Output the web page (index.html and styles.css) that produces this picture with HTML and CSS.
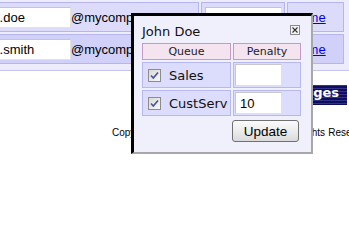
FILE: index.html
```html
<!DOCTYPE html>
<html>
<head>
<meta charset="utf-8">
<link rel="stylesheet" href="styles.css">
</head>
<body>
<div class="page">
  <div class="grid">
    <div class="row r1">
      <div class="cell c-user"><input class="txt user" value="john.doe"><span class="domain">@mycompany.com</span></div>
      <div class="cell c-ext"><input class="txt ext" value="1001"></div>
      <div class="cell c-link"><a href="#">Name</a></div>
    </div>
    <div class="row r2">
      <div class="cell c-user"><input class="txt user" value="jane.smith"><span class="domain">@mycompany.com</span></div>
      <div class="cell c-ext"><input class="txt ext" value="1002"></div>
      <div class="cell c-link"><a href="#">Name</a></div>
    </div>
  </div>
  <div class="savebar"><span class="save">Save Changes</span></div>
  <div class="copy">Copyright © 2009 MyCompany, Inc. – All Rights Reserved.</div>
</div>

<div class="popup">
  <div class="ptitle">
    <span>John Doe</span>
    <svg class="close" width="10" height="10" viewBox="0 0 10 10">
      <rect x="0.5" y="0.5" width="9" height="9" fill="#f2f2f2" stroke="#8a8a8a"/>
      <path d="M2.5 2.5 L7.5 7.5 M7.5 2.5 L2.5 7.5" stroke="#333" stroke-width="1.1"/>
    </svg>
  </div>
  <div class="ptable">
    <div class="th">Queue</div>
    <div class="th">Penalty</div>
    <div class="td qcell">
      <span class="cb"><svg width="11" height="11" viewBox="0 0 11 11"><path d="M2 5.5 L4.3 8 L9 2.5" fill="none" stroke="#46549a" stroke-width="1.6"/></svg></span>
      <span>Sales</span>
    </div>
    <div class="td pcell"><input class="pin" value=""></div>
    <div class="td qcell">
      <span class="cb"><svg width="11" height="11" viewBox="0 0 11 11"><path d="M2 5.5 L4.3 8 L9 2.5" fill="none" stroke="#46549a" stroke-width="1.6"/></svg></span>
      <span>CustServ</span>
    </div>
    <div class="td pcell"><input class="pin" value="10"></div>
  </div>
  <div class="actions"><button class="btn">Update</button></div>
</div>
</body>
</html>
```

FILE: styles.css
```css
html, body {
  margin: 0;
  background: #fff;
  overflow: hidden;
}
body {
  font-family: "Liberation Sans", Arial, sans-serif;
  font-size: 13px;
  color: #000;
}
.page {
  margin-left: -40px;
}
.grid {
  background: #ececfc;
  padding: 2px 0 6px 0;
  border-bottom: 1px solid #c4c4f0;
  display: flex;
  flex-direction: column;
  gap: 2px;
}
.row {
  display: flex;
  gap: 2px;
  height: 30px;
}
.cell {
  box-sizing: border-box;
  border: 1px solid #b6b6ee;
  background: #dcdcfa;
  display: flex;
  align-items: center;
  white-space: nowrap;
  overflow: hidden;
}
.r2 .cell {
  background: #d0d0f8;
}
.c-user { width: 239px; padding-left: 10px; }
.c-ext { width: 84px; padding-left: 3px; }
.c-link { width: 57px; padding-left: 3px; }
.txt {
  box-sizing: border-box;
  height: 21px;
  margin: 0;
  border: 1px solid #c6c6c6;
  border-right-color: #e2e2e2;
  border-bottom-color: #e2e2e2;
  padding: 0 3px;
  background: #fff;
  font: 13px "Liberation Sans", Arial, sans-serif;
  color: #000;
}
.user { width: 100px; }
.ext { width: 77px; }
.c-link a {
  color: #0000ee;
  text-decoration: underline;
}
.savebar {
  display: flex;
  justify-content: flex-end;
  margin: 14px 2px 0 0;
}
.save {
  height: 20px;
  line-height: 20px;
  padding: 0 8px 0 16px;
  color: #fff;
  font: bold 13px "DejaVu Sans", Verdana, sans-serif;
  background: repeating-linear-gradient(to bottom, #33338a 0 1px, #0e0e5e 1px 3px);
}
.copy {
  margin-top: 22px;
  padding-left: 152px;
  font-size: 10px;
  line-height: 12px;
  white-space: nowrap;
  word-spacing: 0.35px;
}
.popup {
  position: absolute;
  left: 131px;
  top: 13px;
  width: 159px;
  padding: 8px 10px 10px 8px;
  background: #f0f0fc;
  border-left: 3px solid #000;
  border-top: 3px solid #000;
  border-right: 2px solid #a8a8a8;
  border-bottom: 2px solid #a8a8a8;
  font-family: "DejaVu Sans", Verdana, sans-serif;
  color: #111;
}
.ptitle {
  display: flex;
  justify-content: space-between;
  align-items: flex-start;
  height: 16px;
  line-height: 16px;
  font-size: 13px;
}
.close {
  display: block;
  margin: 1px 1px 0 0;
}
.ptable {
  display: grid;
  grid-template-columns: 89px 68px;
  grid-template-rows: 17px 26px 26px;
  gap: 2px;
  margin-top: 3px;
}
.th {
  box-sizing: border-box;
  border: 1px solid #c898c8;
  background: #f4e4f0;
  font-size: 11px;
  line-height: 15px;
  text-align: center;
  color: #222;
}
.td {
  box-sizing: border-box;
  border: 1px solid #b8b8f0;
  background: #dcdcfc;
  display: flex;
  align-items: center;
}
.qcell {
  padding-left: 5px;
  gap: 8px;
  font-size: 13px;
  white-space: nowrap;
}
.cb {
  box-sizing: border-box;
  width: 13px;
  height: 13px;
  border: 1px solid #8c8c8c;
  background: linear-gradient(135deg, #d8d8d8, #f8f8f8);
  display: flex;
  align-items: center;
  justify-content: center;
}
.cb svg { display: block; }
.pcell {
  padding-left: 1px;
}
.pin {
  box-sizing: border-box;
  width: 47px;
  height: 22px;
  margin: 0;
  border: 1px solid #c8c8c8;
  border-right-color: #e0e0e0;
  border-bottom-color: #e0e0e0;
  padding: 0 4px;
  background: #fff;
  font: 13px "Liberation Sans", Arial, sans-serif;
  color: #000;
}
.actions {
  display: flex;
  justify-content: flex-end;
  margin-top: 4px;
  padding-right: 2px;
}
.btn {
  box-sizing: border-box;
  width: 67px;
  height: 22px;
  margin: 0;
  padding: 0;
  border: 1px solid #707070;
  border-radius: 3px;
  background: linear-gradient(to bottom, #fbfbfb 0%, #ececec 50%, #dadada 100%);
  font: 13.5px "Liberation Sans", Arial, sans-serif;
  color: #000;
}
```
